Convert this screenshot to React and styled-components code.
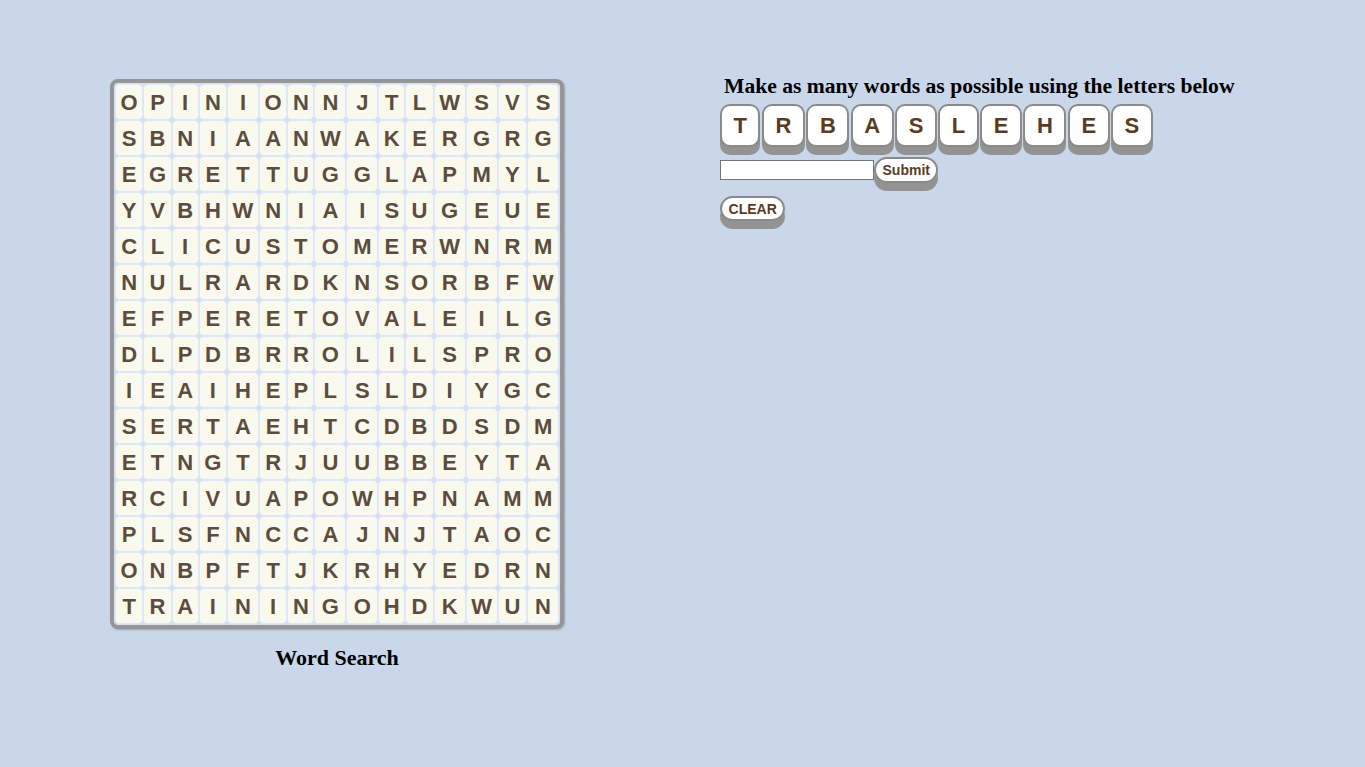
import React, { useState } from "react";
import styled, { createGlobalStyle } from "styled-components";

const GlobalStyle = createGlobalStyle`
  html, body {
    margin: 0;
    padding: 0;
    background-color: #cad7eb;
  }
`;

const Page = styled.div`
  display: flex;
  align-items: flex-start;
  min-height: 780px;
  box-sizing: border-box;
  padding: 72px 0 0 110px;
`;

const LeftColumn = styled.div`
  display: flex;
  flex-direction: column;
  align-items: center;
  margin-top: 7px;
`;

const GridFrame = styled.div`
  border: 4px solid #959595;
  border-radius: 8px;
  background-color: #d3def1;
  box-shadow: 1px 1px 2px rgba(0, 0, 0, 0.25);
`;

const Grid = styled.table`
  border-collapse: separate;
  border-spacing: 2px;
`;

const Cell = styled.td`
  padding: 4.5px 4.6px;
  line-height: 25px;
  text-align: center;
  font-family: "Liberation Sans", Arial, sans-serif;
  font-weight: bold;
  font-size: 22px;
  color: #5c4c3d;
  background-color: #faf9ee;
  border-radius: 4px;
  box-shadow: 0 0 2px 1px #e3ebf8;
`;

const Caption = styled.h2`
  margin: 16px 0 0;
  font-family: "Liberation Serif", "Times New Roman", serif;
  font-size: 22px;
  font-weight: bold;
  color: #000;
`;

const RightColumn = styled.div`
  margin-left: 156px;
  display: flex;
  flex-direction: column;
  align-items: flex-start;
`;

const Heading = styled.h2`
  margin: 2px 0 5px;
  padding-left: 4px;
  font-family: "Liberation Serif", "Times New Roman", serif;
  font-size: 21.6px;
  font-weight: bold;
  line-height: 25px;
  color: #000;
`;

const TileRow = styled.div`
  display: flex;
  gap: 1.5px;
`;

const Tile = styled.button`
  height: 43px;
  padding: 0 11.5px;
  background-color: #fff;
  border: 2px solid #8a8a8a;
  border-radius: 10px;
  box-shadow: 0 8px 0 #939393;
  font-family: "Liberation Sans", Arial, sans-serif;
  font-weight: bold;
  font-size: 22px;
  color: #5a3b1f;
  cursor: pointer;
`;

const EntryRow = styled.div`
  display: flex;
  align-items: center;
  margin-top: 10px;
`;

const WordInput = styled.input`
  width: 154px;
  height: 20px;
  box-sizing: border-box;
  border: 1px solid #767676;
  background-color: #fff;
  padding: 1px 2px;
  font-size: 13px;
`;

const PillButton = styled.button`
  height: ${(p) => p.$height}px;
  padding: 0 6.5px;
  background-color: #fff;
  border: 2px solid #8a8a8a;
  border-radius: 13px;
  box-shadow: 0 8px 0 #939393;
  font-family: "Liberation Sans", Arial, sans-serif;
  font-weight: bold;
  font-size: 14px;
  color: #5a3b1f;
  cursor: pointer;
`;

const ClearRow = styled.div`
  margin-top: 13px;
`;

const rows = [
  "OPINIONNJTLWSVS",
  "SBNIAANWAKERGRG",
  "EGRETTUGGLAPMYL",
  "YVBHWNIAISUGEUE",
  "CLICUSTOMERWNRM",
  "NULRARDKNSORBFW",
  "EFPERETOVALEILG",
  "DLPDBRROLILSPRO",
  "IEAIHEPLSLDIYGC",
  "SERTAEHTCDBDSDM",
  "ETNGTRJUUBBEYTA",
  "RCIVUAPOWHPNAMM",
  "PLSFNCCAJNJTAOC",
  "ONBPFTJKRHYEDRN",
  "TRAININGOHDKWUN",
];

const letters = ["T", "R", "B", "A", "S", "L", "E", "H", "E", "S"];

const App = () => {
  const [word, setWord] = useState("");

  return (
    <>
      <GlobalStyle />
      <Page>
        <LeftColumn>
          <GridFrame>
            <Grid>
              <tbody>
                {rows.map((row, r) => (
                  <tr key={r}>
                    {row.split("").map((ch, c) => (
                      <Cell key={c}>{ch}</Cell>
                    ))}
                  </tr>
                ))}
              </tbody>
            </Grid>
          </GridFrame>
          <Caption>Word Search</Caption>
        </LeftColumn>
        <RightColumn>
          <Heading>Make as many words as possible using the letters below</Heading>
          <TileRow>
            {letters.map((l, i) => (
              <Tile key={i} onClick={() => setWord(word + l)}>
                {l}
              </Tile>
            ))}
          </TileRow>
          <EntryRow>
            <WordInput value={word} onChange={(e) => setWord(e.target.value)} />
            <PillButton $height={26}>Submit</PillButton>
          </EntryRow>
          <ClearRow>
            <PillButton $height={25} onClick={() => setWord("")}>
              CLEAR
            </PillButton>
          </ClearRow>
        </RightColumn>
      </Page>
    </>
  );
};

export default App;
